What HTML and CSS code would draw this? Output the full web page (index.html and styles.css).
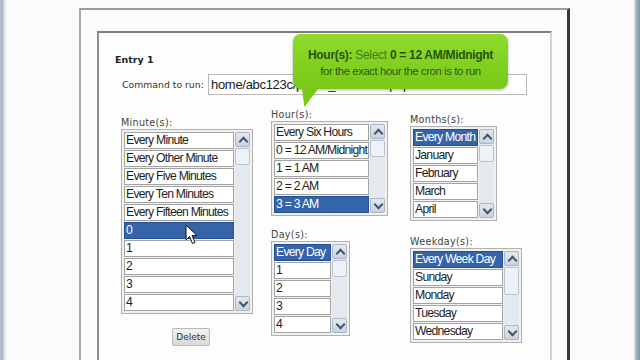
FILE: index.html
```html
<!DOCTYPE html>
<html lang="en">
<head>
    <meta charset="UTF-8">
    <meta name="viewport" content="width=device-width, initial-scale=1.0">
    <title>Cron Job Entry</title>
    <link rel="stylesheet" href="styles.css">
</head>
<body>
    <div class="screen">
        <div class="edge edge-left"></div>
        <div class="page">
            <div class="outer-panel">
                <div class="entry-panel">
                    <h2 class="entry-title">Entry 1</h2>
                    <div class="command-row">
                        <label for="command">Command to run:</label>
                        <input type="text" id="command" value="home/abc123c/public_html/cron.php">
                    </div>
                    <div class="schedule">
                        <div class="field-col col-minutes">
                            <div class="field-label">Minute(s):</div>
                            <div class="listbox lb-minutes">
                                <div class="options">
                                    <div class="option">Every Minute</div>
                                    <div class="option">Every Other Minute</div>
                                    <div class="option">Every Five Minutes</div>
                                    <div class="option">Every Ten Minutes</div>
                                    <div class="option">Every Fifteen Minutes</div>
                                    <div class="option selected">0</div>
                                    <div class="option">1</div>
                                    <div class="option">2</div>
                                    <div class="option">3</div>
                                    <div class="option">4</div>
                                </div>
                                <div class="scrollbar">
                                    <span class="sb-btn sb-up"></span>
                                    <span class="sb-thumb"></span>
                                    <span class="sb-track"></span>
                                    <span class="sb-btn sb-down"></span>
                                </div>
                            </div>
                            <button class="delete-btn">Delete</button>
                            <svg class="cursor" width="13" height="21" viewBox="0 0 13 21">
                                <polygon points="1,1 1,16 4.5,12.5 7.5,19.5 10,18.5 7,11.5 12,11.5" fill="#fff" stroke="#111" stroke-width="1"/>
                            </svg>
                        </div>
                        <div class="field-col col-mid">
                            <div class="field-label">Hour(s):</div>
                            <div class="listbox lb-hours">
                                <div class="options">
                                    <div class="option">Every Six Hours</div>
                                    <div class="option">0 = 12 AM/Midnight</div>
                                    <div class="option">1 = 1 AM</div>
                                    <div class="option">2 = 2 AM</div>
                                    <div class="option selected">3 = 3 AM</div>
                                </div>
                                <div class="scrollbar">
                                    <span class="sb-btn sb-up"></span>
                                    <span class="sb-thumb"></span>
                                    <span class="sb-track"></span>
                                    <span class="sb-btn sb-down"></span>
                                </div>
                            </div>
                            <div class="field-label label-days">Day(s):</div>
                            <div class="listbox lb-days">
                                <div class="options">
                                    <div class="option selected">Every Day</div>
                                    <div class="option">1</div>
                                    <div class="option">2</div>
                                    <div class="option">3</div>
                                    <div class="option">4</div>
                                </div>
                                <div class="scrollbar">
                                    <span class="sb-btn sb-up"></span>
                                    <span class="sb-thumb"></span>
                                    <span class="sb-track"></span>
                                    <span class="sb-btn sb-down"></span>
                                </div>
                            </div>
                        </div>
                        <div class="field-col col-right">
                            <div class="field-label">Months(s):</div>
                            <div class="listbox lb-months">
                                <div class="options">
                                    <div class="option selected">Every Month</div>
                                    <div class="option">January</div>
                                    <div class="option">February</div>
                                    <div class="option">March</div>
                                    <div class="option">April</div>
                                </div>
                                <div class="scrollbar">
                                    <span class="sb-btn sb-up"></span>
                                    <span class="sb-thumb"></span>
                                    <span class="sb-track"></span>
                                    <span class="sb-btn sb-down"></span>
                                </div>
                            </div>
                            <div class="field-label label-weekday">Weekday(s):</div>
                            <div class="listbox lb-weekday">
                                <div class="options">
                                    <div class="option selected">Every Week Day</div>
                                    <div class="option">Sunday</div>
                                    <div class="option">Monday</div>
                                    <div class="option">Tuesday</div>
                                    <div class="option">Wednesday</div>
                                </div>
                                <div class="scrollbar">
                                    <span class="sb-btn sb-up"></span>
                                    <span class="sb-thumb thumb-tall"></span>
                                    <span class="sb-track"></span>
                                    <span class="sb-btn sb-down"></span>
                                </div>
                            </div>
                        </div>
                    </div>
                    <div class="tooltip">
                        <div class="tip-line1"><b>Hour(s):</b> <span class="tip-soft">Select</span> <b>0 = 12 AM/Midnight</b></div>
                        <div class="tip-line2">for the exact hour the cron is to run</div>
                    </div>
                </div>
            </div>
        </div>
        <div class="edge edge-right"></div>
    </div>
</body>
</html>
```

FILE: styles.css
```css
* {
    box-sizing: border-box;
}
body {
    margin: 0;
    background-color: #fbfbfb;
    font-family: "DejaVu Sans", Verdana, sans-serif;
    overflow: hidden;
}
.screen {
    display: flex;
    width: 640px;
    height: 360px;
    overflow: hidden;
}
.edge {
    width: 6px;
    flex: none;
}
.edge-left {
    background: linear-gradient(to right, #c2ccd6, #9eafc0 35%, #d8dee5 65%, #f1f3f5);
}
.edge-right {
    background: linear-gradient(to right, #e3e8ec, #a2b4c0 40%, #7c94a3);
}
.page {
    flex: 1;
    padding: 8px 0 0 73px;
}
.outer-panel {
    width: 491px;
    height: 420px;
    border-left: 2px solid #a6a6a6;
    border-top: 2px solid #9c9c9c;
    border-right: 3px solid #383838;
    padding: 21px 15px 0 16px;
    background-color: #fcfcfc;
}
.entry-panel {
    position: relative;
    height: 400px;
    border-left: 2px solid #8f8f8f;
    border-top: 2px solid #7d7d7d;
    border-right: 2px solid #d2d2d2;
    padding: 21px 0 0 16px;
    background-color: #fdfdfd;
}
.entry-title {
    margin: 0;
    font-size: 9.5px;
    line-height: 12px;
    font-weight: bold;
    color: #222;
}
.command-row {
    display: flex;
    align-items: center;
    gap: 5px;
    margin: 8px 0 0 7px;
}
.command-row label {
    flex: none;
    width: 81px;
    font-size: 9.3px;
    color: #333;
    white-space: nowrap;
}
.command-row input {
    width: 319px;
    height: 21px;
    border: 1px solid #b9b9b9;
    padding: 0 2px;
    font: 13px "Liberation Sans", Arial, sans-serif;
    letter-spacing: -0.3px;
    color: #1a1a1a;
    background-color: #fff;
}
.schedule {
    display: grid;
    grid-template-columns: 150px 139px 1fr;
    align-items: start;
    margin: 14px 0 0 6px;
}
.field-col {
    position: relative;
    display: flex;
    flex-direction: column;
    align-items: flex-start;
}
.col-minutes {
    padding-top: 8px;
}
.col-right {
    padding-top: 5px;
}
.field-label {
    font-size: 9.6px;
    line-height: 12px;
    letter-spacing: 0.3px;
    color: #444;
}
.label-days {
    margin-top: 13px;
}
.label-weekday {
    margin-top: 15px;
}
.listbox {
    display: flex;
    gap: 1px;
    border: 1px solid #b1b1b1;
    padding: 2px;
    background-color: #f1f1f1;
}
.lb-minutes { width: 132px; }
.lb-hours { width: 117px; }
.lb-days { width: 79px; }
.lb-months { width: 87px; }
.lb-weekday { width: 112px; }
.options {
    flex: 1;
    min-width: 0;
    display: flex;
    flex-direction: column;
    gap: 1px;
}
.option {
    height: 17px;
    border: 1px solid #a3a3a3;
    background-color: #fff;
    padding-left: 1px;
    font: 12.2px/15px "Liberation Sans", Arial, sans-serif;
    letter-spacing: -0.75px;
    color: #1e1e1e;
    white-space: nowrap;
    overflow: hidden;
}
.option.selected {
    background-color: #3664aa;
    border-color: #25508f;
    color: #fff;
}
.scrollbar {
    flex: none;
    width: 15px;
    display: flex;
    flex-direction: column;
    background-color: #e4e9ef;
}
.sb-btn {
    position: relative;
    height: 15px;
    border: 1px solid #aab7c7;
    border-radius: 2px;
    background: linear-gradient(#e3e8ee, #c9d3df);
}
.sb-btn::before {
    content: "";
    position: absolute;
    left: 4px;
    width: 5px;
    height: 5px;
    border-left: 2px solid #40566f;
    border-top: 2px solid #40566f;
}
.sb-up::before {
    top: 5px;
    transform: rotate(45deg);
}
.sb-down::before {
    top: 2px;
    transform: rotate(225deg);
}
.sb-thumb {
    height: 17px;
    margin-top: 1px;
    border: 1px solid #b7c3d1;
    border-radius: 2px;
    background-color: #eef2f6;
}
.thumb-tall {
    height: 28px;
}
.sb-track {
    flex: 1;
}
.delete-btn {
    align-self: flex-start;
    margin: 14px 0 0 51px;
    width: 38px;
    height: 18px;
    padding: 0;
    border: 1px solid #b8b8b8;
    border-radius: 2px;
    background: linear-gradient(#f3f3f3, #d8d8d8);
    font-family: "DejaVu Sans", Verdana, sans-serif;
    font-size: 9px;
    color: #333;
}
.cursor {
    position: absolute;
    left: 64px;
    top: 115px;
}
.tooltip {
    position: absolute;
    left: 194px;
    top: 1px;
    width: 215px;
    height: 55px;
    padding-top: 14px;
    border-radius: 8px;
    background: linear-gradient(#8edb2e, #78c817);
    box-shadow: 0 1px 3px rgba(0, 0, 0, 0.3);
    text-align: center;
    font-family: "Liberation Sans", Arial, sans-serif;
    color: #245508;
}
.tooltip::after {
    content: "";
    position: absolute;
    left: 9px;
    top: 100%;
    width: 16px;
    height: 18px;
    background-color: #78c817;
    clip-path: polygon(0 0, 100% 0, 15% 100%);
}
.tip-line1 {
    font-size: 12px;
    line-height: 15px;
    letter-spacing: -0.3px;
}
.tip-soft {
    color: #3f7d14;
}
.tip-line2 {
    margin-top: 2px;
    font-size: 11.3px;
    line-height: 13px;
    letter-spacing: -0.4px;
    color: #2a5c0c;
}
```
